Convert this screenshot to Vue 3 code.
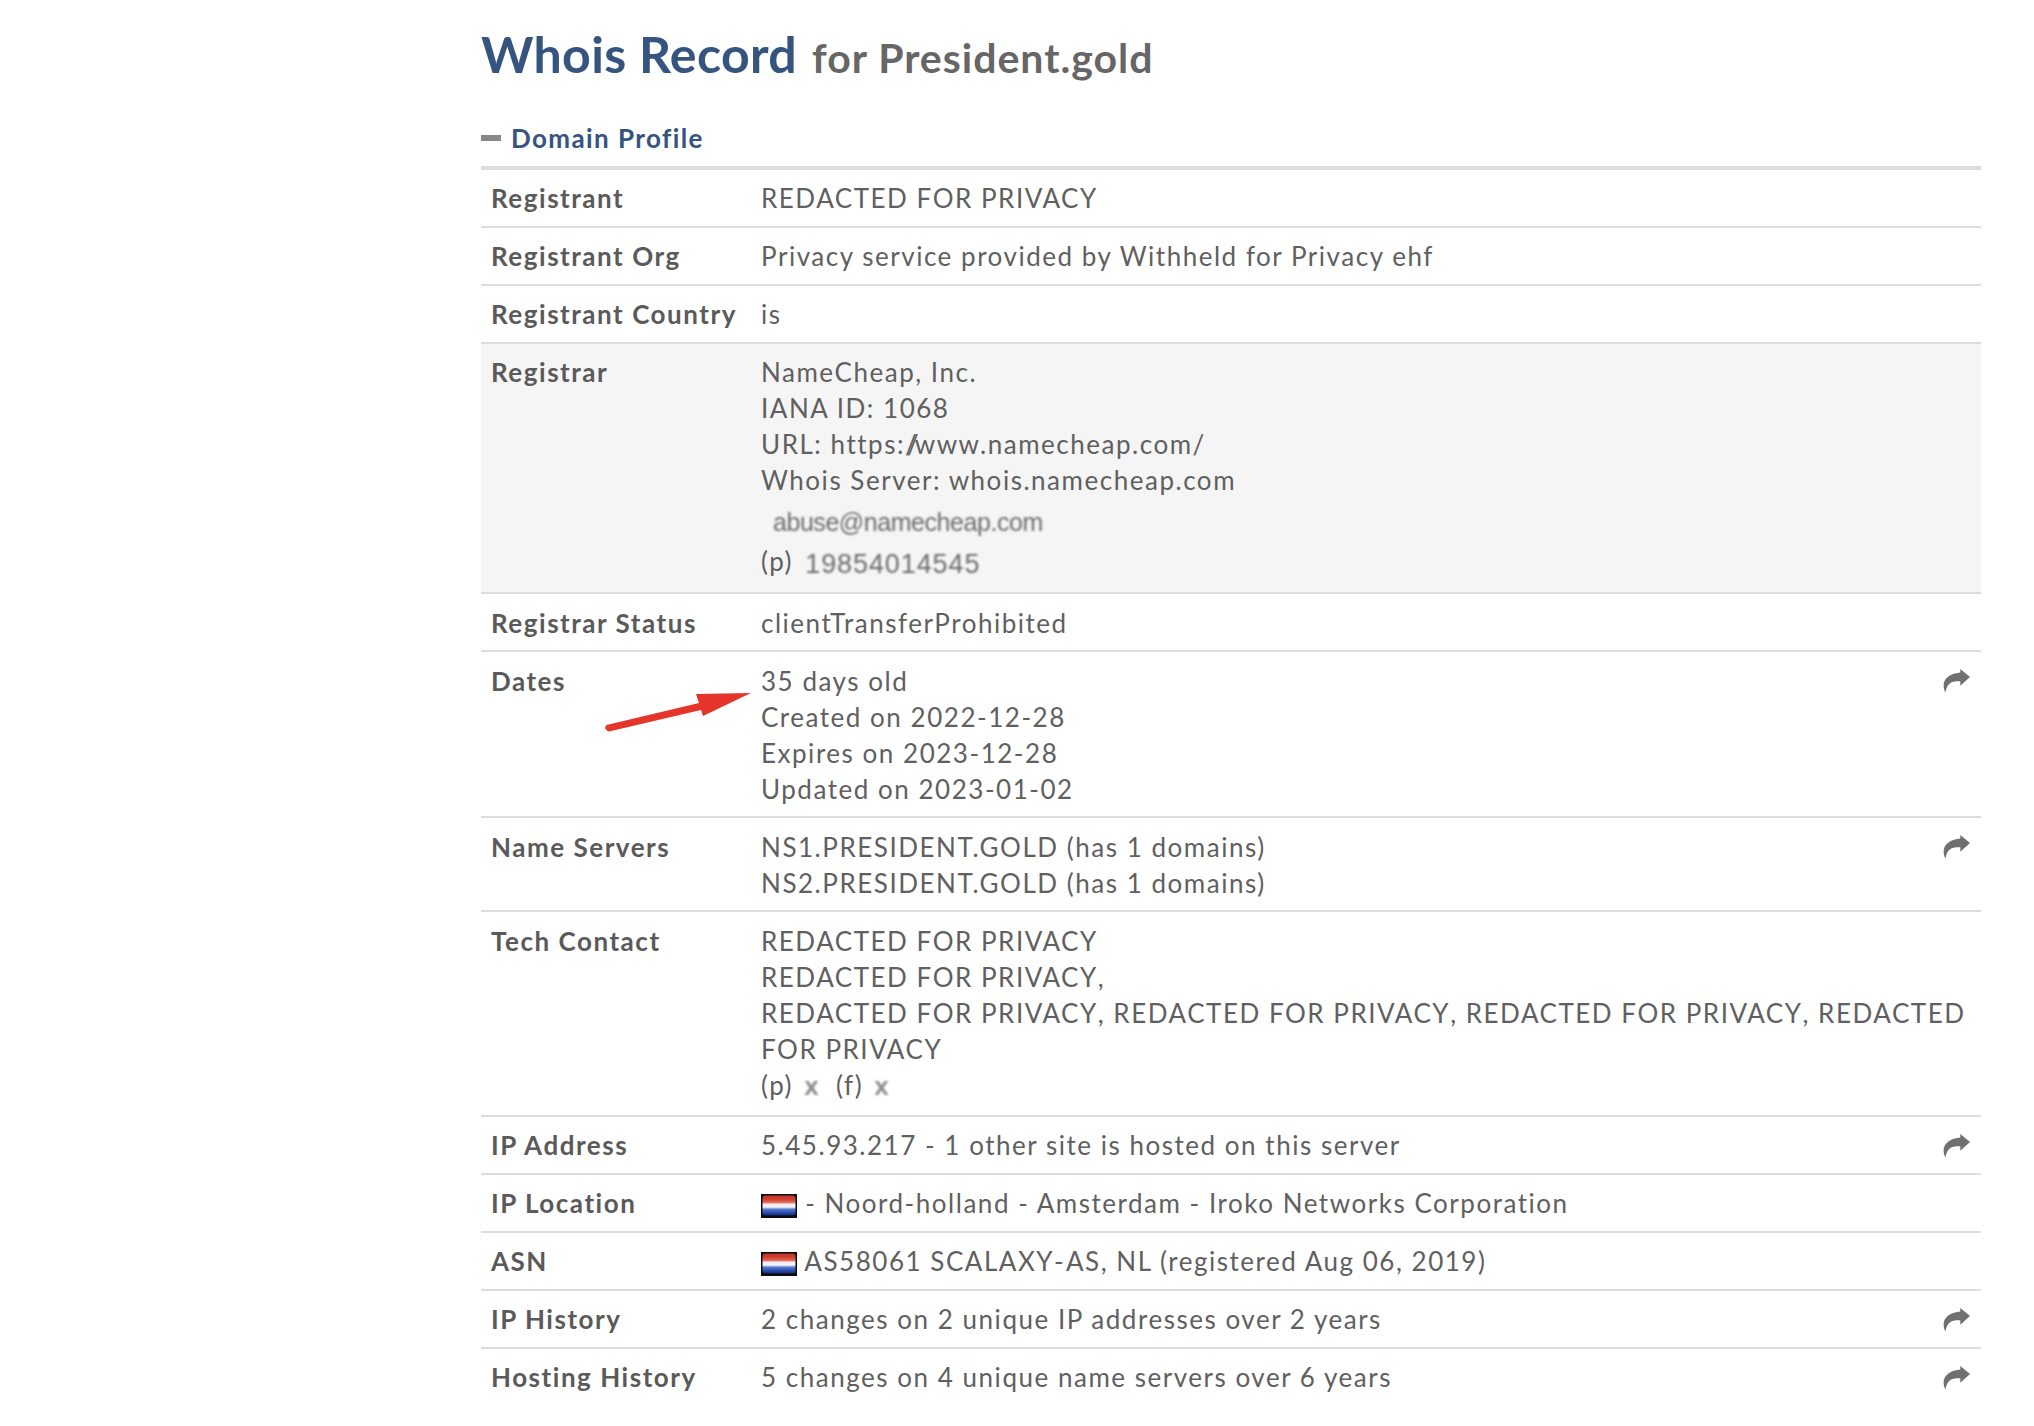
<template>
  <main class="page">
    <h1 class="title"><span class="title-main">Whois Record</span><span class="title-sub">for President.gold</span></h1>
    <h2 class="section"><span class="minus"></span>Domain Profile</h2>
    <div class="table">
      <div class="row"><div class="label">Registrant</div><div class="value">REDACTED FOR PRIVACY</div></div>
      <div class="row"><div class="label">Registrant Org</div><div class="value">Privacy service provided by Withheld for Privacy ehf</div></div>
      <div class="row"><div class="label">Registrant Country</div><div class="value">is</div></div>
      <div class="row shaded">
        <div class="label">Registrar</div>
        <div class="value">
          <div>NameCheap, Inc.</div>
          <div>IANA ID: 1068</div>
          <div>URL: https:<span class="slashes">//</span>www.namecheap.com/</div>
          <div>Whois Server: whois.namecheap.com</div>
          <div class="img-line"><span class="blurred email">abuse@namecheap.com</span></div>
          <div class="img-line">(p) <span class="blurred phone">19854014545</span></div>
        </div>
      </div>
      <div class="row nudge"><div class="label">Registrar Status</div><div class="value">clientTransferProhibited</div></div>
      <div class="row nudge">
        <div class="label">Dates</div>
        <div class="value">
          <div>35 days old</div>
          <div>Created on 2022-12-28</div>
          <div>Expires on 2023-12-28</div>
          <div>Updated on 2023-01-02</div>
        </div>
        <svg class="red-arrow" width="150" height="40" viewBox="0 0 150 40">
          <path d="M2.5 33 L95 11 L92 2 L147 1 L99 24 L97 18 L5 39.5 Q-1 37 2.5 33 Z" fill="#e5352b" />
        </svg>
        <svg class="share" viewBox="0 0 27 24"><path :d="sharePath" /></svg>
      </div>
      <div class="row nudge">
        <div class="label">Name Servers</div>
        <div class="value">
          <div>NS1.PRESIDENT.GOLD (has 1 domains)</div>
          <div>NS2.PRESIDENT.GOLD (has 1 domains)</div>
        </div>
        <svg class="share" viewBox="0 0 27 24"><path :d="sharePath" /></svg>
      </div>
      <div class="row nudge">
        <div class="label">Tech Contact</div>
        <div class="value">
          <div>REDACTED FOR PRIVACY</div>
          <div>REDACTED FOR PRIVACY<span class="comma">,</span></div>
          <div>REDACTED FOR PRIVACY<span class="comma">,</span> REDACTED FOR PRIVACY<span class="comma">,</span> REDACTED FOR PRIVACY<span class="comma">,</span> REDACTED</div>
          <div>FOR PRIVACY</div>
          <div class="contact-line">(p) <span class="blurred x">x</span> (f) <span class="blurred x">x</span></div>
        </div>
      </div>
      <div class="row">
        <div class="label">IP Address</div>
        <div class="value">5.45.93.217 - 1 other site is hosted on this server</div>
        <svg class="share" viewBox="0 0 27 24"><path :d="sharePath" /></svg>
      </div>
      <div class="row">
        <div class="label">IP Location</div>
        <div class="value"><svg class="flag" viewBox="0 0 36 24"><use href="#nl-flag" /></svg> - Noord-holland - Amsterdam - Iroko Networks Corporation</div>
      </div>
      <div class="row">
        <div class="label">ASN</div>
        <div class="value"><svg class="flag" viewBox="0 0 36 24"><use href="#nl-flag" /></svg> AS58061 SCALAXY<span class="hyphen">-</span>AS, NL (registered Aug 06, 2019)</div>
      </div>
      <div class="row">
        <div class="label">IP History</div>
        <div class="value">2 changes on 2 unique IP addresses over 2 years</div>
        <svg class="share" viewBox="0 0 27 24"><path :d="sharePath" /></svg>
      </div>
      <div class="row last">
        <div class="label">Hosting History</div>
        <div class="value">5 changes on 4 unique name servers over 6 years</div>
        <svg class="share" viewBox="0 0 27 24"><path :d="sharePath" /></svg>
      </div>
    </div>
    <svg class="defs" width="0" height="0">
      <defs>
        <linearGradient id="nl-bands" x1="0" y1="0" x2="0" y2="1">
          <stop offset="0" stop-color="#b5342c" />
          <stop offset="0.2" stop-color="#d5402f" />
          <stop offset="0.34" stop-color="#e0675c" />
          <stop offset="0.44" stop-color="#f7efef" />
          <stop offset="0.58" stop-color="#f4f5fa" />
          <stop offset="0.68" stop-color="#5f7dd0" />
          <stop offset="0.84" stop-color="#2c50b0" />
          <stop offset="1" stop-color="#152a6c" />
        </linearGradient>
        <symbol id="nl-flag" viewBox="0 0 36 24">
          <rect width="36" height="24" fill="#0c0c14" />
          <rect x="1.5" y="1.5" width="33" height="20" rx="3" fill="url(#nl-bands)" />
        </symbol>
      </defs>
    </svg>
  </main>
</template>

<script setup>
const sharePath = 'M17.3 0 L27 8 L17.3 16.7 V12.2 C10 11.8 3.8 13 2.5 23.6 C-1.2 17 -0.8 5.5 17.3 3.6 Z'
</script>

<style>
html, body { background: #fff; }
</style>

<style scoped>
.page {
  box-sizing: border-box;
  width: 2034px;
  height: 1426px;
  padding: 24px 53px 0 481px;
  font-family: Lato, "Open Sans", sans-serif;
  color: #5a5a5a;
  overflow: hidden;
}
.title {
  margin: 0;
  height: 56px;
  display: flex;
  align-items: baseline;
  gap: 15px;
  font-weight: 400;
}
.title-main { font-size: 50px; font-weight: 700; color: #35547f; letter-spacing: 0.35px; }
.title-sub { font-size: 41px; font-weight: 700; color: #666; letter-spacing: 1px; }
.section {
  margin: 42px 0 0;
  height: 44px;
  display: flex;
  align-items: flex-start;
  font-size: 26px;
  line-height: 32px;
  font-weight: 700;
  color: #35547f;
  letter-spacing: 1.4px;
  border-bottom: 4px solid #ddd;
}
.minus {
  width: 20px;
  height: 6px;
  margin: 13px 10px 0 0;
  background: #888;
}
.row {
  position: relative;
  display: grid;
  grid-template-columns: 270px 1fr;
  padding: 10px 0 10px 10px;
  border-bottom: 2px solid #ddd;
  font-size: 26px;
  line-height: 36px;
  letter-spacing: 1.525px;
}
.nudge { padding-top: 11px; padding-bottom: 9px; }
.shaded { background: #f5f5f5; }
.last { border-bottom: 0; }
.label { font-weight: 700; color: #5a5a5a; }
.value { color: #606060; font-weight: 400; }
.img-line { height: 42px; line-height: 43px; }
.contact-line { padding-bottom: 2px; }
.slashes { letter-spacing: -4px; }
.comma { font-kerning: none; }
.hyphen { font-kerning: none; letter-spacing: 2.2px; }
.blurred {
  font-family: "Liberation Sans", Arial, sans-serif;
  filter: blur(0.9px);
  display: inline-block;
  color: #6c6c6c;
  letter-spacing: 0;
}
.email { margin-left: 12px; font-size: 25px; letter-spacing: -0.45px; transform: translateY(2px); }
.phone { font-size: 27px; margin-left: 4px; letter-spacing: 0.9px; transform: translateY(2px); }
.x { font-weight: 700; margin: 0 9px 0 3px; color: #8c8c8c; }
.flag {
  width: 36px;
  height: 24px;
  vertical-align: -5px;
  filter: blur(0.4px);
}
.share {
  position: absolute;
  right: 11px;
  top: 17px;
  width: 27px;
  height: 24px;
  fill: #707070;
}
.red-arrow {
  position: absolute;
  left: 123px;
  top: 40px;
}
.defs { position: absolute; }
</style>
